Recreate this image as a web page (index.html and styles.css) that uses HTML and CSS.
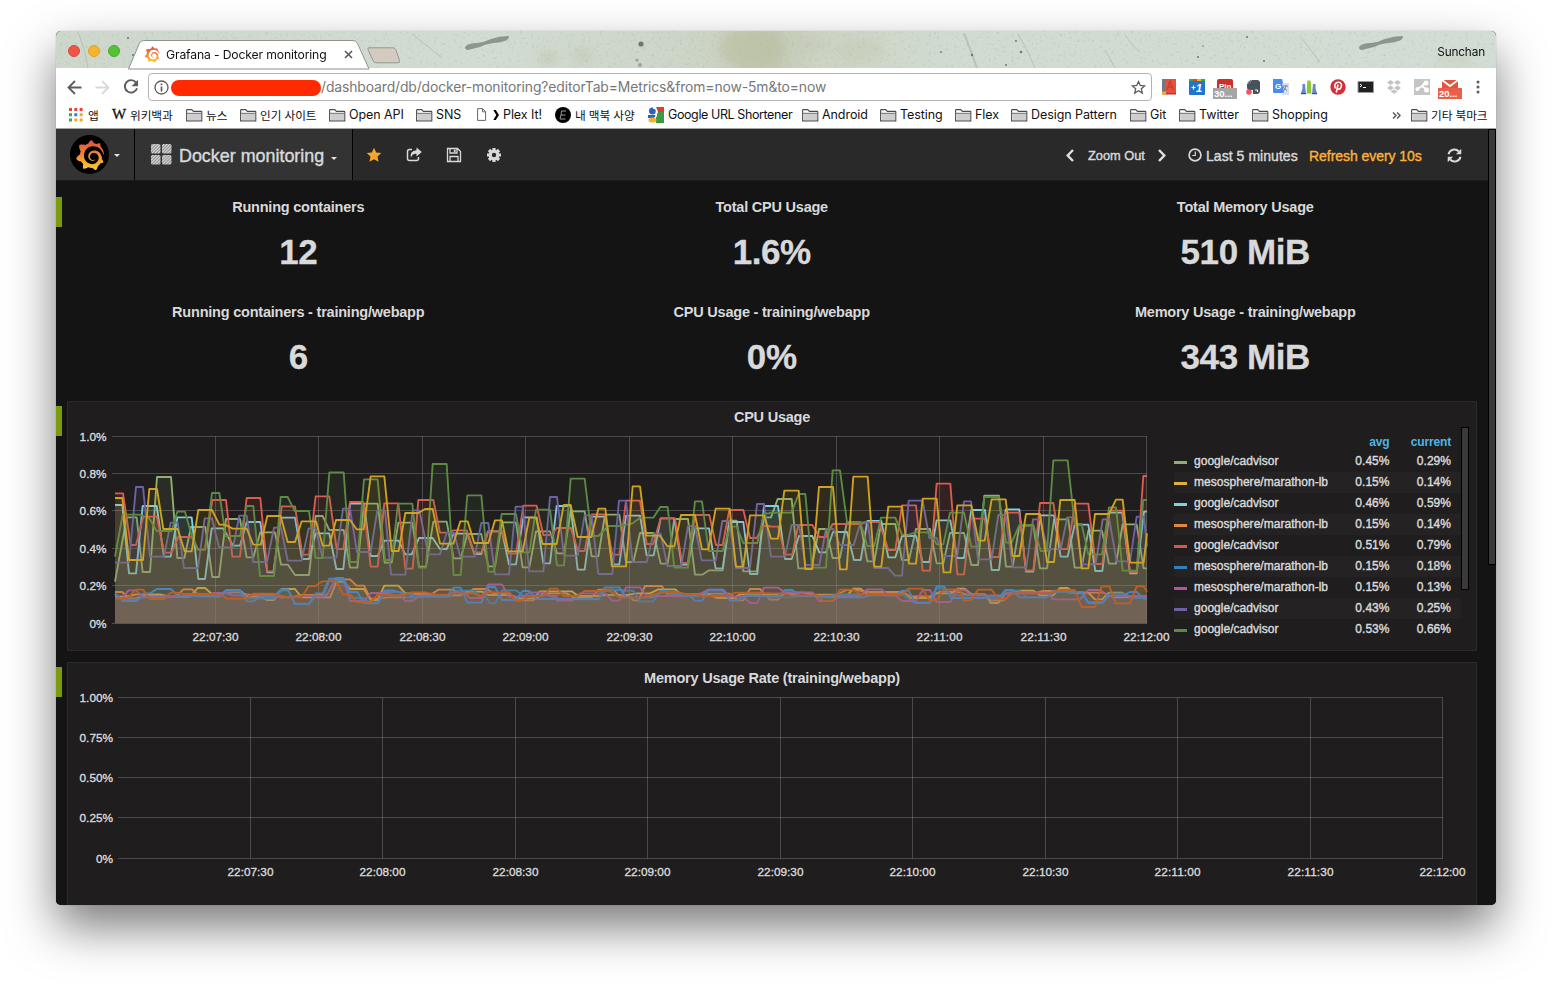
FILE: index.html
```html
<!DOCTYPE html>
<html lang="ko">
<head>
<meta charset="utf-8">
<title>Grafana - Docker monitoring</title>
<link rel="stylesheet" href="styles.css">
</head>
<body>
<svg class="defs" width="0" height="0">
  <defs>
    <linearGradient id="gf" x1="0" y1="0" x2="0" y2="1"><stop offset="0" stop-color="#e0503b"/><stop offset=".45" stop-color="#ee8038"/><stop offset="1" stop-color="#fbd22c"/></linearGradient>
    <pattern id="hatch" width="2.2" height="2.2" patternUnits="userSpaceOnUse" patternTransform="rotate(45)"><rect width="2.2" height="2.2" fill="#8f8f8f"/><rect width="1.1" height="2.2" fill="#dcdcdc"/></pattern>
    <symbol id="grafana" viewBox="0 0 24 24"><path d="M23.02 10.59a8.578 8.578 0 0 0-.862-3.034 8.911 8.911 0 0 0-1.789-2.445c.337-1.342-.413-2.505-.413-2.505-1.292-.08-2.113.4-2.416.62-.052-.02-.102-.044-.154-.064-.22-.089-.446-.172-.677-.247-.231-.073-.47-.14-.711-.197a9.867 9.867 0 0 0-.875-.161C14.557.753 12.94 0 12.94 0c-1.804 1.145-2.147 2.744-2.147 2.744l-.018.093c-.098.029-.2.057-.298.088-.138.042-.275.094-.413.143-.138.055-.275.107-.41.166a8.869 8.869 0 0 0-1.557.87l-.063-.029c-2.497-.955-4.716.195-4.716.195-.203 2.658.996 4.33 1.235 4.636a11.608 11.608 0 0 0-.607 2.635C1.636 12.684.953 15.014.953 15.014c1.926 2.214 4.171 2.351 4.171 2.351.003-.002.006-.002.006-.005.285.509.615.994.986 1.446.156.19.32.371.488.548-.704 2.009.099 3.68.099 3.68 2.144.08 3.553-.937 3.849-1.173a9.784 9.784 0 0 0 3.164.501h.08l.055-.003.107-.002.103-.005.003.002c1.01 1.44 2.788 1.646 2.788 1.646 1.264-1.332 1.337-2.653 1.337-2.94v-.058c0-.02-.003-.039-.003-.06.265-.187.52-.387.758-.6a7.875 7.875 0 0 0 1.415-1.7c1.43.083 2.437-.885 2.437-.885-.236-1.49-1.085-2.216-1.264-2.354l-.018-.013-.016-.013a.217.217 0 0 1-.031-.02c.008-.092.016-.18.02-.27.011-.162.016-.323.016-.48v-.253l-.005-.098-.008-.135a1.891 1.891 0 0 0-.01-.13c-.003-.042-.008-.083-.013-.125l-.016-.124-.018-.122a6.215 6.215 0 0 0-2.032-3.73 6.015 6.015 0 0 0-3.222-1.46 6.292 6.292 0 0 0-.85-.048l-.107.002h-.063l-.044.003-.104.008a4.777 4.777 0 0 0-3.335 1.695c-.332.4-.592.84-.768 1.297a4.594 4.594 0 0 0-.312 1.817l.003.091c.005.055.007.11.013.164a3.615 3.615 0 0 0 .698 1.82 3.53 3.53 0 0 0 1.827 1.282c.33.098.66.14.971.137.039 0 .078 0 .114-.002l.063-.003c.02 0 .041-.003.062-.003.034-.002.065-.007.099-.01.007 0 .018-.003.028-.003l.031-.005.06-.008a1.18 1.18 0 0 0 .112-.02c.036-.008.072-.013.109-.024a2.634 2.634 0 0 0 .914-.415c.028-.02.056-.041.085-.065a.248.248 0 0 0 .039-.35.244.244 0 0 0-.309-.06l-.078.042c-.09.044-.184.083-.283.116a2.476 2.476 0 0 1-.475.096c-.028.003-.054.006-.083.006l-.083.002c-.026 0-.054 0-.08-.002l-.102-.006h-.012l-.024.006c-.016-.003-.031-.003-.044-.006-.031-.002-.06-.007-.091-.01a2.59 2.59 0 0 1-.724-.213 2.557 2.557 0 0 1-.667-.438 2.52 2.52 0 0 1-.805-1.475 2.306 2.306 0 0 1-.029-.444l.006-.122v-.023l.002-.031c.003-.021.003-.04.005-.06a3.163 3.163 0 0 1 1.352-2.29 3.12 3.12 0 0 1 .937-.43 2.946 2.946 0 0 1 .776-.101h.06l.07.002.045.003h.026l.07.005a4.041 4.041 0 0 1 1.635.49 3.94 3.94 0 0 1 1.602 1.662 3.77 3.77 0 0 1 .397 1.414l.005.076.003.075c.002.026.002.05.002.075 0 .024.003.052 0 .07v.065l-.002.073-.008.174a6.195 6.195 0 0 1-.08.639 5.1 5.1 0 0 1-.267.927 5.31 5.31 0 0 1-.624 1.13 5.052 5.052 0 0 1-3.237 2.014 4.82 4.82 0 0 1-.649.066l-.039.003h-.287a6.607 6.607 0 0 1-1.716-.265 6.776 6.776 0 0 1-3.4-2.274 6.75 6.75 0 0 1-.746-1.15 6.616 6.616 0 0 1-.714-2.596l-.005-.083-.002-.02v-.056l-.003-.073v-.096l-.003-.104v-.07l.003-.163c.008-.22.026-.45.054-.678a8.707 8.707 0 0 1 .28-1.355c.128-.444.286-.872.473-1.277a7.04 7.04 0 0 1 1.456-2.1 5.925 5.925 0 0 1 .953-.763c.169-.111.343-.213.524-.306.089-.05.182-.091.273-.135.047-.02.093-.042.138-.062a7.177 7.177 0 0 1 .714-.267l.145-.045c.049-.015.098-.026.148-.041.098-.029.197-.052.296-.076.049-.013.1-.02.15-.033l.15-.032.151-.028.076-.013.075-.01.153-.024c.057-.01.114-.013.171-.023l.169-.021c.036-.003.073-.008.106-.01l.073-.008.036-.003.042-.002c.057-.003.114-.008.171-.01l.086-.006h.023l.037-.003.145-.007a7.999 7.999 0 0 1 1.708.125 7.917 7.917 0 0 1 2.048.68 8.253 8.253 0 0 1 1.672 1.09l.09.077.089.078c.06.052.114.107.171.159.057.052.112.106.166.16.052.055.107.107.159.164a8.671 8.671 0 0 1 1.41 1.978c.012.026.028.052.04.078l.04.078.075.156c.023.051.05.1.07.153l.065.15a8.848 8.848 0 0 1 .45 1.34.19.19 0 0 0 .201.142.186.186 0 0 0 .172-.184c.01-.246.002-.532-.024-.856z" fill="url(#gf)"/></symbol>
    <symbol id="folder" viewBox="0 0 17 16"><path d="M.6 13.900V3.200c0-.4.2-.6.6-.6h4.600l1.600 1.800h7.800c.4 0 .6.2.6.6v8.900z" fill="#fff" stroke="#4d4d4d" stroke-width="1.100"/><path d="M1.400 6.800h13.600v6.500H1.400z" fill="#cfcdd0"/><path d="M.6 6.300h15.200" stroke="#6b6b6b"/></symbol>
  </defs>
</svg>

<div class="window">
  <header class="titlebar">
    <svg class="texture" width="1440" height="37" viewBox="56 31 1440 37">
      <defs>
        <linearGradient id="stone"><stop offset="0" stop-color="#ced7cc"/><stop offset=".3" stop-color="#d2dcd3"/><stop offset=".45" stop-color="#ccd4c6"/><stop offset=".5" stop-color="#c3cab5"/><stop offset=".53" stop-color="#ced4c4"/><stop offset=".62" stop-color="#d0dbd1"/><stop offset="1" stop-color="#d2ddd5"/></linearGradient>
        <filter id="b4" x="-50%" y="-50%" width="200%" height="200%"><feGaussianBlur stdDeviation="4"/></filter>
        <filter id="b1" x="-20%" y="-20%" width="140%" height="140%"><feGaussianBlur stdDeviation=".5"/></filter>
        <filter id="grain"><feTurbulence type="fractalNoise" baseFrequency=".35" numOctaves="3" seed="4"/><feColorMatrix values="0 0 0 0 .35  0 0 0 0 .38  0 0 0 0 .32  0 0 0 3 -1.75"/></filter>
      </defs>
      <rect x="56" y="31" width="1440" height="37" fill="url(#stone)"/>
      <rect x="56" y="31" width="1440" height="37" filter="url(#grain)" opacity=".32"/>
      <g fill="#b9bf9f" opacity=".6" filter="url(#b4)"><ellipse cx="752" cy="48" rx="32" ry="22"/><ellipse cx="548" cy="58" rx="10" ry="8" opacity=".6"/><ellipse cx="582" cy="56" rx="12" ry="8" opacity=".5"/><ellipse cx="860" cy="50" rx="24" ry="12" opacity=".4"/><ellipse cx="815" cy="44" rx="16" ry="8" opacity=".4"/><ellipse cx="1455" cy="60" rx="20" ry="6" opacity=".4"/></g>
      <g fill="#8d968c"><path id="smear" d="M465 47q3-4 12-4 8-1 14-4 9-3 17-3 2 0 0 3-3 3-14 4-9 1-14 4-4 1-12 3-3 0-3-3z"/><use href="#smear" x="894"/></g>
      <g stroke="#a9b3a9" fill="none" opacity=".6" filter="url(#b1)"><path d="M964 33q7 18 13 35" stroke-width="2"/><path d="M1018 34q10 16 17 34M1105 50l10 18M1125 35q10 14 15 17M78 32q8 18 10 36M1300 36l20 26M412 34l30 24"/></g>
      <g fill="#5e665e" opacity=".85"><circle cx="641" cy="44" r="2.6"/><circle cx="1016" cy="41" r="1"/><circle cx="1021" cy="52" r="1.3"/><circle cx="941" cy="52" r=".9"/><circle cx="1006" cy="65" r="1"/><circle cx="972" cy="55" r="1.200"/><circle cx="1198" cy="57" r="1"/><circle cx="1203" cy="46" r=".8"/><circle cx="1247" cy="37" r="1"/><circle cx="1264" cy="61" r="1"/><circle cx="128" cy="38" r="1.1"/><circle cx="133" cy="55" r="1"/><circle cx="637" cy="60" r="1.6" opacity=".5"/><circle cx="640" cy="65" r="2" opacity=".5"/></g>
    </svg>
    <div class="lights"><i class="red"></i><i class="amber"></i><i class="green"></i></div>
    <div class="tab">
      <svg class="tab-shape" width="245" height="29" viewBox="0 0 245 29"><path d="M.5 29 11.500 3Q13 .5 15.500 .5H225q3 0 4.500 3L241 29z" fill="#fff" stroke="#8d938d"/></svg>
      <svg class="tab-icon" width="16" height="17"><use href="#grafana"/></svg>
      <span class="tab-title">Grafana - Docker monitoring</span>
      <svg class="tab-close" width="9" height="9" viewBox="0 0 9 9"><path d="m1 1 7 7m0-7-7 7" stroke="#5a5a5a" stroke-width="1.600"/></svg>
    </div>
    <svg class="newtab" width="34" height="17" viewBox="0 0 34 17"><path d="M2 .8h24q2 0 2.800 1.800l3.700 10.800q.7 2.400-1.500 2.400H9q-2 0-2.800-1.800L1 2.800Q.4.800 2 .8z" fill="#d3cbbf" stroke="#949892"/></svg>
    <span class="profile">Sunchan</span>
  </header>

  <div class="toolbar">
    <div class="history">
      <svg width="15" height="15" viewBox="0 0 15 15"><path d="M14.500 7.500H1.500M8 1 1.500 7.500 8 14" fill="none" stroke="#5c5c5c" stroke-width="1.800"/></svg>
      <svg width="15" height="15" viewBox="0 0 15 15"><path d="M.5 7.500h13M7 1l6.500 6.500L7 14" fill="none" stroke="#d9d9d9" stroke-width="1.800"/></svg>
      <svg width="16" height="16" viewBox="0 0 16 16"><path d="M13 3.600A6.200 6.200 0 1 0 14 9.200" fill="none" stroke="#5c5c5c" stroke-width="1.900"/><path d="M15 .8v6.400H8.600z" fill="#5c5c5c"/></svg>
    </div>
    <div class="omnibox">
      <svg width="15" height="15" viewBox="0 0 15 15"><circle cx="7.500" cy="7.500" r="6.500" fill="none" stroke="#5c5c5c" stroke-width="1.300"/><path d="M7.500 6.500V11.500M7.500 3.500v1.700" stroke="#5c5c5c" stroke-width="1.700"/></svg>
      <i class="redacted"></i>
      <span class="url">/dashboard/db/docker-monitoring?editorTab=Metrics&amp;from=now-5m&amp;to=now</span>
      <svg class="star" width="15" height="15" viewBox="0 0 15 15"><path d="m7.500 1.500 1.800 4 4.300.4-3.300 2.900 1 4.300-3.800-2.300-3.800 2.300 1-4.300L1.400 5.900l4.300-.4z" fill="none" stroke="#5c5c5c" stroke-width="1.300"/></svg>
    </div>
    <div class="exts">
      <svg viewBox="0 0 24 24"><path d="M5 4h14v14H5z" fill="#e8503c"/><path d="M5 4h3v14H5z" fill="#737880"/><path d="M5 18h14v1.500H5z" fill="#a83b2e"/><path d="M5 16.500h4V20l-2-1.300L5 20z" fill="#f0b32e"/><path d="m10 15 3-9 3.500 9M11 12h5" stroke="#c43f30" stroke-width="1.500" fill="none"/></svg>
      <svg viewBox="0 0 24 24"><rect x="4" y="4" width="16" height="16" rx="1" fill="#2276c9"/><path d="M4 4h4v2H4z" fill="#44a33c"/><path d="M8 4h4v2H8z" fill="#e5412f"/><path d="M12 4h4v2h-4z" fill="#f2b51e"/><path d="M16 4h4v2h-4z" fill="#44a33c"/><path d="M6.500 12.500h4M8.500 10.500v4" stroke="#fff" stroke-width="1.200"/><text x="11" y="16.500" font-size="11" font-weight="700" font-style="italic" fill="#fff">1</text></svg>
      <svg viewBox="0 0 24 24"><rect x="4" y="4" width="16" height="12" rx="2" fill="#cf2f2a"/><text x="6" y="14" font-size="8" font-weight="700" fill="#fff">Pin</text><path d="M0 13h24v11H0z" fill="#a5a5a5"/><text x="1" y="22" font-size="9.500" font-weight="700" fill="#fff">30...</text></svg>
      <svg viewBox="0 0 24 24"><path d="M8 8 11 5h5q3 0 3 3v7q0 4-3 4h-4v-4H8q-2 0-2-3V9z" fill="#48525a"/><path d="M6 8 10 4.500V8z" fill="#6b757c"/><path d="M14 15h2.500v2" stroke="#fff" fill="none"/><circle cx="8" cy="17" r="2.800" fill="#f2545b"/></svg>
      <svg viewBox="0 0 24 24"><path d="M4 4h9l4 14H5q-1 0-1-1z" fill="#4b8af0"/><path d="M13 8h7v12h-7l2-3z" fill="#dadfe6"/><text x="6" y="14" font-size="8" font-weight="700" fill="#fff">G</text><path d="M14 11h5m-2-1q0 4-3 6m0-4 4 4" stroke="#6d86a5" fill="none"/></svg>
      <svg viewBox="0 0 24 24"><path d="M5.500 9H8l1 9H4q2-4 1.500-9zM18.500 9H16l-1 9h5q-2-4-1.500-9z" fill="#6488cf"/><path d="M10.500 5.500h3l1.500 13H9z" fill="#8fc62d"/><path d="M4 18h5v1.200H4zM15 18h5v1.200h-5z" fill="#3d4fae"/><path d="M9.300 9v9M14.700 9v9" stroke="#fff" stroke-width=".8"/></svg>
      <svg viewBox="0 0 24 24"><circle cx="12" cy="12" r="7.700" fill="#d32f38"/><path d="M9.500 13.500Q7.500 9 11 7.500q4-1 4.500 2.500-.5 5-3.500 4l-.8-.8M12 9.500 10.300 17.500" fill="none" stroke="#fff" stroke-width="1.600"/></svg>
      <svg viewBox="0 0 24 24"><path d="M4 6.500h15.500v11H4z" fill="#222" stroke="#999"/><path d="m6 9 2 1.500L6 12M9 12.500h3" stroke="#fff" fill="none"/></svg>
      <svg viewBox="0 0 24 24"><path d="m8.500 5 3.500 2.500L8.500 10 5 7.500zM15.500 5 12 7.500l3.500 2.500L19 7.500zM8.500 10.500 12 13l-3.500 2.500L5 13zM15.500 10.500 12 13l3.500 2.500L19 13zM8.500 16.500 12 14.500l3.500 2-3.500 2.300z" fill="#c3c3c3"/></svg>
      <svg viewBox="0 0 24 24"><path d="M4 4h16v16H4z" fill="#c5c5c5"/><path d="m6 15 6-4 4-4m-4 4 5 4" stroke="#fff" stroke-width="1.800" fill="none"/><circle cx="16" cy="8" r="2.500" fill="#fff"/><circle cx="16.500" cy="15" r="2.500" fill="#fff"/><circle cx="7.500" cy="14" r="2" fill="#fff"/></svg>
      <svg viewBox="0 0 24 24"><path d="M4 5h16v8H4z" fill="#e2543f"/><path d="m4 5 8 6 8-6" stroke="#fff" stroke-width="1.800" fill="none"/><path d="M0 13h24v11H0z" fill="#e8604c"/><text x="1" y="22" font-size="9.500" font-weight="700" fill="#fff">20...</text></svg>
      <svg viewBox="0 0 24 24"><circle cx="12" cy="7" r="1.500" fill="#5c5c5c"/><circle cx="12" cy="12" r="1.500" fill="#5c5c5c"/><circle cx="12" cy="17" r="1.500" fill="#5c5c5c"/></svg>
    </div>
  </div>

  <nav class="bookmarks">
    <a class="bm"><svg width="14" height="14" viewBox="0 0 14 14"><path d="M0 0h3v3H0zM5.300 0h3v3h-3zM10.600 0h3v3h-3z" fill="#ea4335"/><path d="M0 5.300h3v3H0z" fill="#34a853"/><path d="M5.300 5.300h3v3h-3z" fill="#2f7de1"/><path d="M10.600 5.300h3v3h-3z" fill="#f4a62a"/><path d="M0 10.600h3v3H0z" fill="#34a853"/><path d="M5.300 10.600h3v3h-3zM10.600 10.600h3v3h-3z" fill="#f4a62a"/></svg><span class="ko">앱</span></a>
    <a class="bm"><b class="wiki">W</b><span class="ko">위키백과</span></a>
    <a class="bm"><svg width="17" height="16"><use href="#folder"/></svg><span class="ko">뉴스</span></a>
    <a class="bm"><svg width="17" height="16"><use href="#folder"/></svg><span class="ko">인기 사이트</span></a>
    <a class="bm"><svg width="17" height="16"><use href="#folder"/></svg><span>Open API</span></a>
    <a class="bm"><svg width="17" height="16"><use href="#folder"/></svg><span>SNS</span></a>
    <a class="bm plex"><svg width="10" height="13" viewBox="0 0 10 13"><path d="M.6.6h5l3 3v8.800h-8zM5.500.6v3.200h3" fill="#fff" stroke="#666"/></svg><span><svg width="7" height="10" viewBox="0 0 7 10"><path d="M.3 0h2.500L6 5 2.800 10H.3l3-5z"/></svg> Plex It!</span></a>
    <a class="bm"><svg width="16" height="16" viewBox="0 0 16 16"><circle cx="8" cy="8" r="8"/><path d="M11 4H6.500L6 8h4.500M6 8l-1 4h5.500" stroke="#9a9a9a" fill="none"/></svg><span class="ko">내 맥북 사양</span></a>
    <a class="bm tight"><svg width="16" height="16" viewBox="0 0 16 16"><path d="M8 0h8v5h-6z" fill="#dd3d32"/><path d="M10 5h6v11H8V9z" fill="#3c9a43"/><circle cx="4.500" cy="4" r="3.500" fill="#2b62bd"/><path d="M0 8h8l-2 3H0z" fill="#2b62bd"/><ellipse cx="4.500" cy="13" rx="4" ry="2.600" fill="#f3b32b"/><path d="M5 1q4 0 3.500 4T8 10" stroke="#fff" stroke-width="1.500" fill="none"/></svg><span>Google URL Shortener</span></a>
    <a class="bm"><svg width="17" height="16"><use href="#folder"/></svg><span>Android</span></a>
    <a class="bm"><svg width="17" height="16"><use href="#folder"/></svg><span>Testing</span></a>
    <a class="bm"><svg width="17" height="16"><use href="#folder"/></svg><span>Flex</span></a>
    <a class="bm"><svg width="17" height="16"><use href="#folder"/></svg><span>Design Pattern</span></a>
    <a class="bm"><svg width="17" height="16"><use href="#folder"/></svg><span>Git</span></a>
    <a class="bm"><svg width="17" height="16"><use href="#folder"/></svg><span>Twitter</span></a>
    <a class="bm"><svg width="17" height="16"><use href="#folder"/></svg><span>Shopping</span></a>
    <svg class="more" width="9" height="7" viewBox="0 0 9 7"><path d="m1 .5 3 3-3 3m4-6 3 3-3 3" fill="none" stroke="#555" stroke-width="1.400"/></svg>
    <a class="bm"><svg width="17" height="16"><use href="#folder"/></svg><span class="ko">기타 북마크</span></a>
  </nav>

  <div class="page">
    <div class="scrollbar"></div>
    <nav class="navbar">
      <a class="brand"><i class="disc"><svg width="30" height="30"><use href="#grafana"/></svg></i><i class="caret"></i></a>
      <a class="board"><svg width="21" height="21" viewBox="0 0 21 21"><g fill="url(#hatch)"><rect width="9.500" height="9.500" rx="1.500"/><rect x="11" width="9.500" height="9.500" rx="1.500"/><rect y="11" width="9.500" height="9.500" rx="1.500"/><rect x="11" y="11" width="9.500" height="9.500" rx="1.500"/></g></svg><span>Docker monitoring</span><i class="caret"></i></a>
      <div class="actions">
        <svg width="16" height="16" viewBox="0 0 16 16"><path d="m8 .8 2.200 4.700 5.100.6-3.800 3.500 1 5.100L8 12.200l-4.500 2.500 1-5.100L.7 6.100l5.100-.6z" fill="#f6a62a"/></svg>
        <svg width="16" height="16" viewBox="0 0 16 16"><path d="M6 2.500H3.500q-2 0-2 2v7q0 2 2 2h7q2 0 2-2V10" fill="none" stroke="#d8d9da" stroke-width="1.500"/><path d="M10.500.5 15.800 5l-5.300 4.500V6.800Q6 6.500 5 10.800 3.200 4 10.500 3.300z" fill="#d8d9da"/></svg>
        <svg width="16" height="16" viewBox="0 0 16 16"><path d="M1.500 1.500h10l3 3v10h-13zM4 1.500V6h7V1.500M4 14V9.500h8V14" fill="none" stroke="#d8d9da" stroke-width="1.300"/><path d="M7.800 2.500h1.800V5H7.800z" fill="#d8d9da"/></svg>
        <svg width="16" height="16" viewBox="0 0 16 16"><path d="M8 1v14M1 8h14M3 3l10 10M13 3 3 13" stroke="#d8d9da" stroke-width="3.200"/><circle cx="8" cy="8" r="3.800" fill="none" stroke="#d8d9da" stroke-width="3.200"/><circle cx="8" cy="8" r="2.200" fill="#292929"/></svg>
      </div>
      <div class="timenav">
        <svg width="8" height="13" viewBox="0 0 8 13"><path d="M7 1 1.700 6.500 7 12" fill="none" stroke="#e2e2e2" stroke-width="2.400"/></svg>
        <span class="zoomout">Zoom Out</span>
        <svg class="next" width="8" height="13" viewBox="0 0 8 13"><path d="m1 1 5.300 5.500L1 12" fill="none" stroke="#e2e2e2" stroke-width="2.400"/></svg>
        <svg class="clock" width="14" height="14" viewBox="0 0 14 14"><circle cx="7" cy="7" r="5.900" fill="none" stroke="#d8d9da" stroke-width="1.700"/><path d="M7.300 3.500v4H4.300" fill="none" stroke="#d8d9da" stroke-width="1.200"/></svg>
        <span class="range">Last 5 minutes</span>
        <span class="refresh">Refresh every 10s</span>
        <svg class="reload" width="15" height="15" viewBox="0 0 15 15"><path d="M1.500 6.300A6 6 0 0 1 11.800 3.500M13.500 8.700A6 6 0 0 1 3.200 11.500" fill="none" stroke="#d8d9da" stroke-width="2"/><path d="M14.300.8v5.400H8.900zM.7 14.200V8.800h5.400z" fill="#d8d9da"/></svg>
      </div>
    </nav>

    <main class="dash">
      <section class="row stats">
        <i class="handle"></i>
        <div class="stat"><h3>Running containers</h3><p>12</p></div>
        <div class="stat"><h3>Total CPU Usage</h3><p>1.6%</p></div>
        <div class="stat"><h3>Total Memory Usage</h3><p>510 MiB</p></div>
        <div class="stat"><h3>Running containers - training/webapp</h3><p>6</p></div>
        <div class="stat"><h3>CPU Usage - training/webapp</h3><p>0%</p></div>
        <div class="stat"><h3>Memory Usage - training/webapp</h3><p>343 MiB</p></div>
      </section>
      <section class="row cpu">
        <i class="handle"></i>
        <div class="panel">
          <h3>CPU Usage</h3>
          <div class="body">
            <svg id="cpu" class="chart" width="1106" height="223" viewBox="68 427 1106 223"></svg>
            <div class="legend">
              <div class="lg head"><span></span><span>avg</span><span>current</span></div>
              <div class="lg c0"><span>google/cadvisor</span><span>0.45%</span><span>0.29%</span></div>
              <div class="lg c1"><span>mesosphere/marathon-lb</span><span>0.15%</span><span>0.14%</span></div>
              <div class="lg c2"><span>google/cadvisor</span><span>0.46%</span><span>0.59%</span></div>
              <div class="lg c3"><span>mesosphere/marathon-lb</span><span>0.15%</span><span>0.14%</span></div>
              <div class="lg c4"><span>google/cadvisor</span><span>0.51%</span><span>0.79%</span></div>
              <div class="lg c5"><span>mesosphere/marathon-lb</span><span>0.15%</span><span>0.18%</span></div>
              <div class="lg c6"><span>mesosphere/marathon-lb</span><span>0.15%</span><span>0.13%</span></div>
              <div class="lg c7"><span>google/cadvisor</span><span>0.43%</span><span>0.25%</span></div>
              <div class="lg c8"><span>google/cadvisor</span><span>0.53%</span><span>0.66%</span></div>
            </div>
            <i class="legend-bar"></i>
          </div>
        </div>
      </section>
      <section class="row mem">
        <i class="handle"></i>
        <div class="panel">
          <h3>Memory Usage Rate (training/webapp)</h3>
          <svg id="mem" class="chart" width="1408" height="217" viewBox="68 688 1408 217"></svg>
        </div>
      </section>
    </main>
  </div>
</div>
<script src="charts.js"></script>
</body>
</html>
```
FILE: styles.css
```css
* { box-sizing: border-box; }
html, body { height: 100%; }
body { margin: 0; background: #fff; overflow: hidden; padding: 31px 56px 0; font-family: "Liberation Sans", Arial, sans-serif; }
.defs { position: absolute; }
svg { display: block; flex: none; overflow: visible; }
h3, p { margin: 0; }

.window { width: 1440px; height: 874px; border-radius: 5px; overflow: hidden; display: flex; flex-direction: column; background: #141414;
  box-shadow: 0 0 1px rgba(0,0,0,.45), 0 22px 48px rgba(0,0,0,.52); }

.titlebar { position: relative; height: 37px; flex: none; display: flex; align-items: flex-start; font: 12.200px Inter, "Noto Sans CJK KR", sans-serif; color: #111; }
.texture { position: absolute; left: 0; top: 0; overflow: hidden; }
.lights { position: relative; display: flex; gap: 8px; padding: 14px 0 0 12px; width: 72px; }
.lights i { width: 12px; height: 12px; border-radius: 50%; }
.lights .red { background: #ee5549; border: 1px solid #d9463b; }
.lights .amber { background: #f6b42c; border: 1px solid #dfa023; }
.lights .green { background: #55c234; border: 1px solid #43a928; }
.tab { position: relative; width: 242px; height: 28px; margin-top: 9px; display: flex; align-items: center; padding-left: 16px; }
.tab-shape { position: absolute; left: 0; top: 0; }
.tab-icon, .tab-title, .tab-close { position: relative; }
.tab-title { margin-left: 6px; width: 178px; white-space: nowrap; letter-spacing: -.15px; }
.newtab { position: relative; margin: 16px 0 0 -3px; }
.profile { position: relative; margin: 14px 11px 0 auto; font-size: 11.800px; letter-spacing: -.15px; }

.toolbar { height: 38px; flex: none; background: #fff; display: flex; align-items: center; padding: 0 5px 0 11px; }
.history { width: 81px; display: flex; gap: 13px; align-items: center; }
.omnibox { width: 1004px; height: 28px; border: 1px solid #b3b3b3; border-radius: 4px; display: flex; align-items: center; padding: 0 5px; }
.redacted { width: 150px; height: 16px; border-radius: 8px; background: #ff2a00; margin-left: 2px; margin-top: 1px; }
.url { font: 13.900px Inter, sans-serif; color: #777; white-space: nowrap; letter-spacing: -.11px; position: relative; top: -.5px; }
.star { margin-left: auto; }
.exts { display: flex; gap: 4.100px; margin-left: 5px; }
.exts svg { width: 24px; height: 24px; font-family: "Liberation Sans", Arial, sans-serif; }

.bookmarks { height: 23px; flex: none; background: #fff; border-bottom: 1px solid #a5a5a5; display: flex; align-items: flex-start; padding: 0 0 0 13px; font: 12.500px Inter, "Noto Sans CJK KR", sans-serif; color: #111; letter-spacing: -.07px; }
.bm { display: flex; align-items: center; height: 17px; gap: 3px; white-space: nowrap; flex: none; }
.bm .ko { font-size: 11.700px; letter-spacing: -.1px; }
.bm.tight { letter-spacing: -.4px; }
.bm:nth-child(1) { width: 43px; gap: 5px; }
.bm:nth-child(2) { width: 74px; }
.bm:nth-child(3) { width: 54px; }
.bm:nth-child(4) { width: 89px; }
.bm:nth-child(5) { width: 87px; }
.bm:nth-child(6) { width: 61px; }
.bm:nth-child(7) { width: 78px; gap: 6px; }
.bm:nth-child(8) { width: 93px; gap: 4px; }
.bm:nth-child(9) { width: 154px; gap: 4px; }
.bm:nth-child(10) { width: 78px; }
.bm:nth-child(11) { width: 75px; }
.bm:nth-child(12) { width: 56px; }
.bm:nth-child(13) { width: 119px; }
.bm:nth-child(14) { width: 49px; }
.bm:nth-child(15) { width: 73px; }
.bm:nth-child(16) { width: 140px; }
.wiki { font: 15px "Liberation Serif", serif; width: 15px; -webkit-text-stroke: .3px; }
.plex span { display: flex; align-items: center; gap: 3px; }
.more { margin: 6px 10px 0 0; }

.page { position: relative; flex: 1; background: #141414; color: #d8d9da; min-height: 0; }
.scrollbar { position: absolute; right: 0; top: 0; width: 8px; height: 436px; background: #3a3a3a; border: 1px solid #000; }
.navbar { width: 1432px; height: 52px; background: #292929; border-bottom: 1px solid #1c1c1c; display: flex; }
.brand { width: 79px; background: #333; border-right: 1px solid #000; display: flex; align-items: center; gap: 5px; padding-left: 14px; }
.disc { width: 39px; height: 39px; border-radius: 50%; background: #000; display: grid; place-items: center; }
.caret { border: 3px solid transparent; border-top-color: #e2e2e2; border-bottom: 0; margin-top: 2px; }
.board { width: 218px; background: #333; border-right: 1px solid #000; display: flex; align-items: center; padding-left: 16px; gap: 7px; font-size: 17.900px; white-space: nowrap; -webkit-text-stroke: .4px; }
.board span { padding-top: 3px; }
.board .caret { margin-top: 7px; }
.actions { display: flex; align-items: center; gap: 24.300px; padding: 1px 0 0 12.500px; }
.timenav { margin-left: auto; width: 422px; display: flex; align-items: center; padding-top: 1px; font-size: 14px; -webkit-text-stroke: .4px; white-space: nowrap; }
.zoomout { font-size: 12.800px; width: 57px; margin-left: 14px; }
.next { margin-left: 13px; }
.clock { margin-left: 22px; }
.range { margin-left: 4px; width: 92px; padding-top: 1px; letter-spacing: .05px; }
.refresh { margin-left: 11px; width: 113px; padding-top: 1px; color: #fbb03b; letter-spacing: -.05px; }
.reload { margin-left: 25px; }

.row { position: relative; }
.handle { position: absolute; left: 0; top: 5px; width: 6px; height: 30px; background: #7b9a0c; }
.stats { display: grid; grid-template-columns: repeat(3, 473.500px); grid-auto-rows: 105px; padding-left: 5.500px; height: 220px; padding-top: 10px; }
.stats .handle { top: 16px; }
.stat { text-align: center; }
.stat h3, .panel h3 { font-size: 14.500px; font-weight: 700; line-height: 17px; padding-top: 8px; letter-spacing: -.22px; text-align: center; }
.stat p { font-size: 35px; font-weight: 700; line-height: 40px; margin-top: 16px; letter-spacing: -.4px; -webkit-text-stroke: .3px; }
.panel { margin-left: 11px; width: 1410px; height: 250px; background: #1f1d1e; border: 1px solid #2b292a; }
.panel h3 { height: 25px; padding-top: 7px; }
.mem { margin-top: 11px; }
.body { display: flex; }
.chart text { font: 11.800px "Liberation Sans", Arial, sans-serif; fill: #d8d9da; stroke: #d8d9da; stroke-width: .35px; }
.legend { width: 287px; padding-top: 3px; font-size: 12px; -webkit-text-stroke: .4px; white-space: nowrap; }
.lg { display: grid; grid-template-columns: 154px 61.500px 61.500px; height: 21px; line-height: 21px; text-align: right; letter-spacing: .03px; }
.lg span:first-child { text-align: left; padding-left: 20px; position: relative; }
.lg span:first-child::before { content: ""; position: absolute; left: 0; top: 10px; width: 13px; height: 3px; background: var(--c); }
.lg.head { color: #4fb4e4; font-weight: 700; line-height: 24px; -webkit-text-stroke: 0; letter-spacing: -.15px; }
.lg:nth-child(odd):not(.head) { background: #242223; }
.c0 { --c: #8fb070; } .c1 { --c: #e0b03c; } .c2 { --c: #82cfdf; } .c3 { --c: #e38745; } .c4 { --c: #d9564b; }
.c5 { --c: #3180c1; } .c6 { --c: #b052a7; } .c7 { --c: #6e62a4; } .c8 { --c: #5c8a45; }
.legend-bar { width: 8px; height: 163px; background: #3a3a3a; border: 1px solid #000; }
```
FILE: charts.js
```js
// Each series is a list of plateaus (start x, end x, y) in three time windows.
var WINDOW_OFFSETS = [0, 1050, 2130];
var series = [
  ['#8fb070', [
    '165 165 545,200 230 352,248 270 516,291 333 231,352 373 474,393 436 381,457 477 531,498 540 357,560 580 472,601 645 397,663 684 494,705 747 525,767 788 348,808 851 390,870 892 503,912 953 311,974 995 488,1015 1057 368',
    '27 48 500,70 110 365,131 152 475,172 214 402,235 255 499,276 318 367,338 358 502,378 420 394,441 462 460,482 524 334,545 565 469,585 628 344,648 670 486,690 731 399,752 773 491,793 834 357,855 877 524,897 938 511,958 980 362,1000 1040 514,1062 1083 352',
    '23 65 297,85 125 505,147 168 387,188 210 474,230 271 369,292 313 484,333 376 372,396 417 480,438 480 387,500 520 490,540 582 399,604 624 495,643 687 287,708 728 500,748 790 377,810 831 505,852 895 358,914 935 503,955 996 392,1017 1038 491,1058 1100 373,1121 1131 505']],
  ['#e0b03c', [
    '165 200 590,228 300 583,330 390 590,413 435 564,456 480 582,510 545 575,560 600 590,620 642 600,665 705 567,725 810 592,830 850 545,870 912 567,932 953 600,973 1015 557,1036 1060 580',
    '0 60 582,90 150 586,170 215 575,235 300 585,330 370 595,390 485 574,505 560 588,585 650 585,680 720 580,745 795 568,815 900 585,920 970 594,990 1110 583',
    '0 60 582,90 230 588,250 272 566,292 400 583,420 480 594,500 545 580,562 584 566,604 645 583,662 685 609,706 728 580,748 790 572,810 850 586,870 893 564,914 955 578,975 996 598,1017 1055 578,1080 1131 590']],
  ['#82cfdf', [
    '165 187 315,207 228 520,248 290 318,312 332 470,352 395 352,415 435 537,455 490 385,519 540 437,560 601 366,622 640 517,663 705 353,726 747 477,767 808 400,829 850 507,870 912 311,932 953 468,973 1016 422,1036 1055 463',
    '27 68 414,90 110 447,131 173 401,193 214 462,234 276 394,297 318 493,340 380 352,400 420 490,440 482 318,503 524 509,545 586 350,608 628 493,648 690 347,710 731 466,752 793 355,815 834 494,855 897 385,917 938 505,958 1000 366,1020 1042 522,1062 1080 318',
    '0 24 318,45 65 477,87 127 408,148 168 457,189 231 396,252 272 480,292 334 363,355 376 472,396 438 408,458 478 486,500 541 361,562 582 474,604 645 330,665 687 510,707 748 328,768 790 515,811 852 346,872 893 470,914 955 374,976 997 513,1018 1057 338,1080 1100 520,1122 1131 335']],
  ['#e38745', [
    '165 187 576,207 228 595,250 350 588,370 395 568,415 480 584,500 540 577,560 640 584,663 700 592,720 800 585,828 870 538,890 912 557,932 960 596,980 1060 592',
    '0 65 582,85 130 569,150 170 582,190 230 567,250 300 580,318 370 601,400 470 580,490 545 592,565 610 569,630 660 590,670 685 601,705 755 558,775 850 586,870 960 581,985 1000 601,1020 1050 567',
    '0 24 599,45 100 578,130 200 584,230 260 570,300 400 576,420 480 589,510 560 575,590 640 584,665 700 602,725 790 580,820 870 573,900 1000 578,1030 1131 592']],
  ['#dd5a4e', [
    '165 189 280,212 228 435,250 291 350,312 334 458,355 395 411,415 435 449,457 498 300,517 540 470,560 601 294,622 642 514,665 705 319,727 747 464,767 808 289,830 850 447,870 910 306,932 953 500,973 1015 310,1036 1058 506',
    '25 70 300,90 120 398,130 170 391,192 215 457,235 276 394,297 318 461,340 380 317,400 425 405,440 483 384,504 524 453,545 585 343,607 628 464,648 690 302,710 730 432,752 795 355,816 833 489,855 898 345,918 938 435,958 1000 330,1020 1040 414,1060 1080 378',
    '0 25 380,45 67 464,85 127 375,148 168 411,188 270 372,290 328 366,355 376 450,396 438 316,458 480 512,500 541 251,562 582 523,602 644 356,665 687 471,706 748 338,768 790 511,810 850 309,872 893 447,915 955 311,977 997 492,1018 1058 332,1080 1100 516,1120 1131 228']],
  ['#3180c1', [
    '165 165 580,185 235 598,255 310 590,330 480 588,500 540 574,560 640 596,665 685 572,705 747 611,767 790 590,808 851 541,870 910 594,932 955 608,975 1020 576,1040 1060 592',
    '0 120 590,140 190 572,215 228 590,240 255 610,276 318 571,338 420 586,441 565 598,585 625 570,645 670 572,690 731 604,751 773 573,793 860 590,890 940 572,960 985 600,1005 1050 586',
    '0 60 592,90 180 588,210 400 583,430 480 607,500 522 565,545 640 586,665 690 597,706 748 572,770 830 592,852 935 576,955 997 606,1020 1060 580,1085 1131 594']],
  ['#b052a7', [
    '165 187 595,205 228 571,250 330 592,350 450 588,460 500 579,520 600 586,620 700 590,720 800 588,828 850 534,870 912 603,932 980 579,1000 1020 585,1036 1058 603',
    '0 10 601,30 110 586,130 160 577,180 215 594,235 276 553,296 340 590,360 400 577,420 440 588,441 487 602,510 585 580,607 628 602,648 690 562,710 810 588,840 870 582,895 940 569,960 1000 590,1020 1042 609,1062 1080 563',
    '0 24 563,45 127 577,148 188 603,210 270 588,290 334 568,355 376 586,396 438 603,458 480 570,500 541 606,562 585 570,605 700 586,720 830 577,850 930 598,955 990 570,1015 1131 588']],
  ['#6e62a4', [
    '165 207 488,228 249 261,270 312 470,332 353 368,372 414 504,434 456 355,477 519 442,538 560 347,580 621 486,642 663 383,683 725 482,746 767 385,787 829 473,849 870 326,891 932 456,952 975 331,993 1036 524,1058 1060 331',
    '25 28 331,55 90 463,110 132 398,151 194 470,214 235 369,255 297 523,317 338 320,358 400 514,420 441 291,462 503 467,524 545 346,565 607 522,627 648 302,668 710 486,730 752 401,772 814 498,834 855 378,875 917 481,937 958 363,978 1020 504,1041 1062 312',
    '3 45 470,65 87 375,107 148 495,168 190 387,210 251 435,272 293 367,313 354 504,375 396 527,416 458 302,478 500 414,520 562 468,582 603 304,624 665 478,685 707 345,728 769 502,789 811 358,832 872 447,892 914 352,937 977 493,998 1018 358,1040 1080 484,1100 1122 350,1131 1131 440']],
  ['#5c8a45', [
    '165 165 470,188 238 344,268 268 355,290 335 393,352 375 335,393 393 400,413 435 449,456 478 279,497 540 408,560 580 318,600 642 528,662 683 291,704 747 333,767 788 474,808 851 217,870 892 486,912 953 238,975 995 480,1014 1057 311',
    '27 48 503,68 110 192,131 152 525,172 214 286,235 252 515,275 318 342,338 358 457,378 420 329,441 462 496,482 524 236,545 565 408,595 628 378,668 668 370,690 730 353,751 773 321,793 834 503,855 876 304,896 938 453,960 980 380,1000 1042 429,1062 1080 340',
    '0 64 338,86 106 282,126 168 503,188 210 211,231 271 366,292 313 438,333 376 353,396 417 404,437 480 397,500 520 433,540 582 338,604 624 440,643 687 291,708 725 428,748 790 375,812 831 453,850 893 181,914 935 372,955 996 463,1017 1038 322,1058 1100 512,1120 1131 300']],
  ['#cda321', [
    '165 187 294,207 249 480,268 291 267,310 353 387,374 395 454,415 456 330,478 495 374,518 560 386,580 602 434,622 662 348,683 705 426,725 768 364,788 808 437,828 870 360,890 911 388,932 973 229,995 1016 453,1036 1060 339',
    '0 25 339,45 68 327,90 130 431,151 173 364,193 235 429,255 276 361,295 338 454,358 378 353,398 440 432,461 482 315,503 544 411,565 586 326,606 648 499,668 690 259,709 750 407,772 793 439,813 855 345,876 895 448,917 959 326,978 1000 500,1020 1062 346',
    '3 24 416,43 86 272,106 127 507,147 189 261,210 230 508,250 293 230,313 334 500,355 396 320,417 438 491,458 500 296,521 541 517,562 604 316,625 644 422,665 707 298,728 748 468,768 810 342,831 852 486,871 914 300,935 955 505,975 1017 342,1038 1058 299,1080 1121 488,1131 1131 400']],
  ['#4c84be', [
    '165 165 582,188 230 603,250 270 580,291 333 567,353 400 588,440 477 590,498 540 570,560 580 604,600 640 590,663 684 568,705 747 612,767 788 580,808 851 536,870 892 576,912 953 610,975 1000 571,1036 1060 582',
    '0 110 590,131 152 563,172 214 608,235 255 561,276 318 600,338 358 573,378 565 597,585 628 562,648 731 592,751 780 578,800 834 582,855 876 602,896 938 569,960 980 602,1000 1050 588',
    '3 25 588,45 67 570,87 140 588,170 280 592,300 376 586,396 416 572,436 480 609,500 522 559,543 640 594,665 690 590,706 728 570,748 830 592,852 893 572,914 935 576,955 997 609,1018 1060 586,1080 1100 576,1121 1131 596']],
  ['#bb6029', [
    '165 200 596,228 249 569,270 312 597,332 350 578,372 480 582,500 560 596,580 640 581,683 725 592,746 767 558,787 829 544,849 870 583,891 932 606,952 1036 585,1055 1060 577',
    '20 45 577,80 110 584,130 190 580,214 214 590,235 297 577,317 338 601,358 400 588,420 441 566,462 503 588,524 600 573,627 700 592,760 800 576,834 855 584,875 940 588,980 1040 578',
    '0 40 580,65 140 586,160 190 602,210 251 569,272 396 584,416 458 566,478 500 601,520 568 568,582 603 601,624 665 569,685 707 597,728 830 580,872 914 570,935 975 621,995 1018 559,1038 1080 610,1100 1121 559,1131 1131 575']]
];

function tracePoints(parts) {
  var pts = [];
  parts.forEach(function (part, i) {
    part.split(',').forEach(function (p) {
      var v = p.split(' ').map(Number);
      pts.push((v[0] + WINDOW_OFFSETS[i]) + ',' + v[2], (v[1] + WINDOW_OFFSETS[i]) + ',' + v[2]);
    });
  });
  return pts.join(' ');
}

function axes(c) {
  var s = '<g stroke="#fff" stroke-opacity=".2">', top = c.ys[0], bottom = c.ys[c.ys.length - 1];
  c.ys.forEach(function (y) { s += '<path d="M' + c.left + ' ' + y + 'H' + (c.xs[9] + .5) + '"/>'; });
  c.xs.forEach(function (x) { s += '<path d="M' + x + ' ' + top + 'V' + bottom + '"/>'; });
  s += '</g>';
  c.ys.forEach(function (y, i) { s += '<text text-anchor="end" x="' + c.labelX + '" y="' + (y + 4.5) + '">' + c.labels[i] + '</text>'; });
  c.xs.forEach(function (x, i) {
    var t = 450 + i * 30, m = Math.floor(t / 60), sec = t % 60;
    s += '<text x="' + (x - 23) + '" y="' + (bottom + 17.5) + '" textLength="46">22:' + (m < 10 ? '0' : '') + m + ':' + (sec || '00') + '</text>';
  });
  return s;
}

var cpu = axes({ left: 112, labelX: 106.5, labels: ['1.0%', '0.8%', '0.6%', '0.4%', '0.2%', '0%'],
  ys: [436.5, 473.5, 510.5, 548.5, 585.5, 623.5],
  xs: [215.5, 318.5, 422.5, 525.5, 629.5, 732.5, 836.5, 939.5, 1043.5, 1146.5] });
cpu += '<g transform="translate(60 400) scale(.33333)">';
series.forEach(function (s) {
  var p = tracePoints(s[1]);
  cpu += '<polygon points="165,670 ' + p + ' 3261,670" fill="' + s[0] + '" fill-opacity=".1"/>' +
    '<polyline points="' + p + '" fill="none" stroke="' + s[0] + '" stroke-width="5.6" stroke-linejoin="round"/>';
});
document.getElementById('cpu').innerHTML = cpu + '</g>';

document.getElementById('mem').innerHTML = axes({ left: 118, labelX: 113, labels: ['1.00%', '0.75%', '0.50%', '0.25%', '0%'],
  ys: [697.5, 737.5, 777.5, 817.5, 858.5],
  xs: [250.5, 382.5, 515.5, 647.5, 780.5, 912.5, 1045.5, 1177.5, 1310.5, 1442.5] });
```
